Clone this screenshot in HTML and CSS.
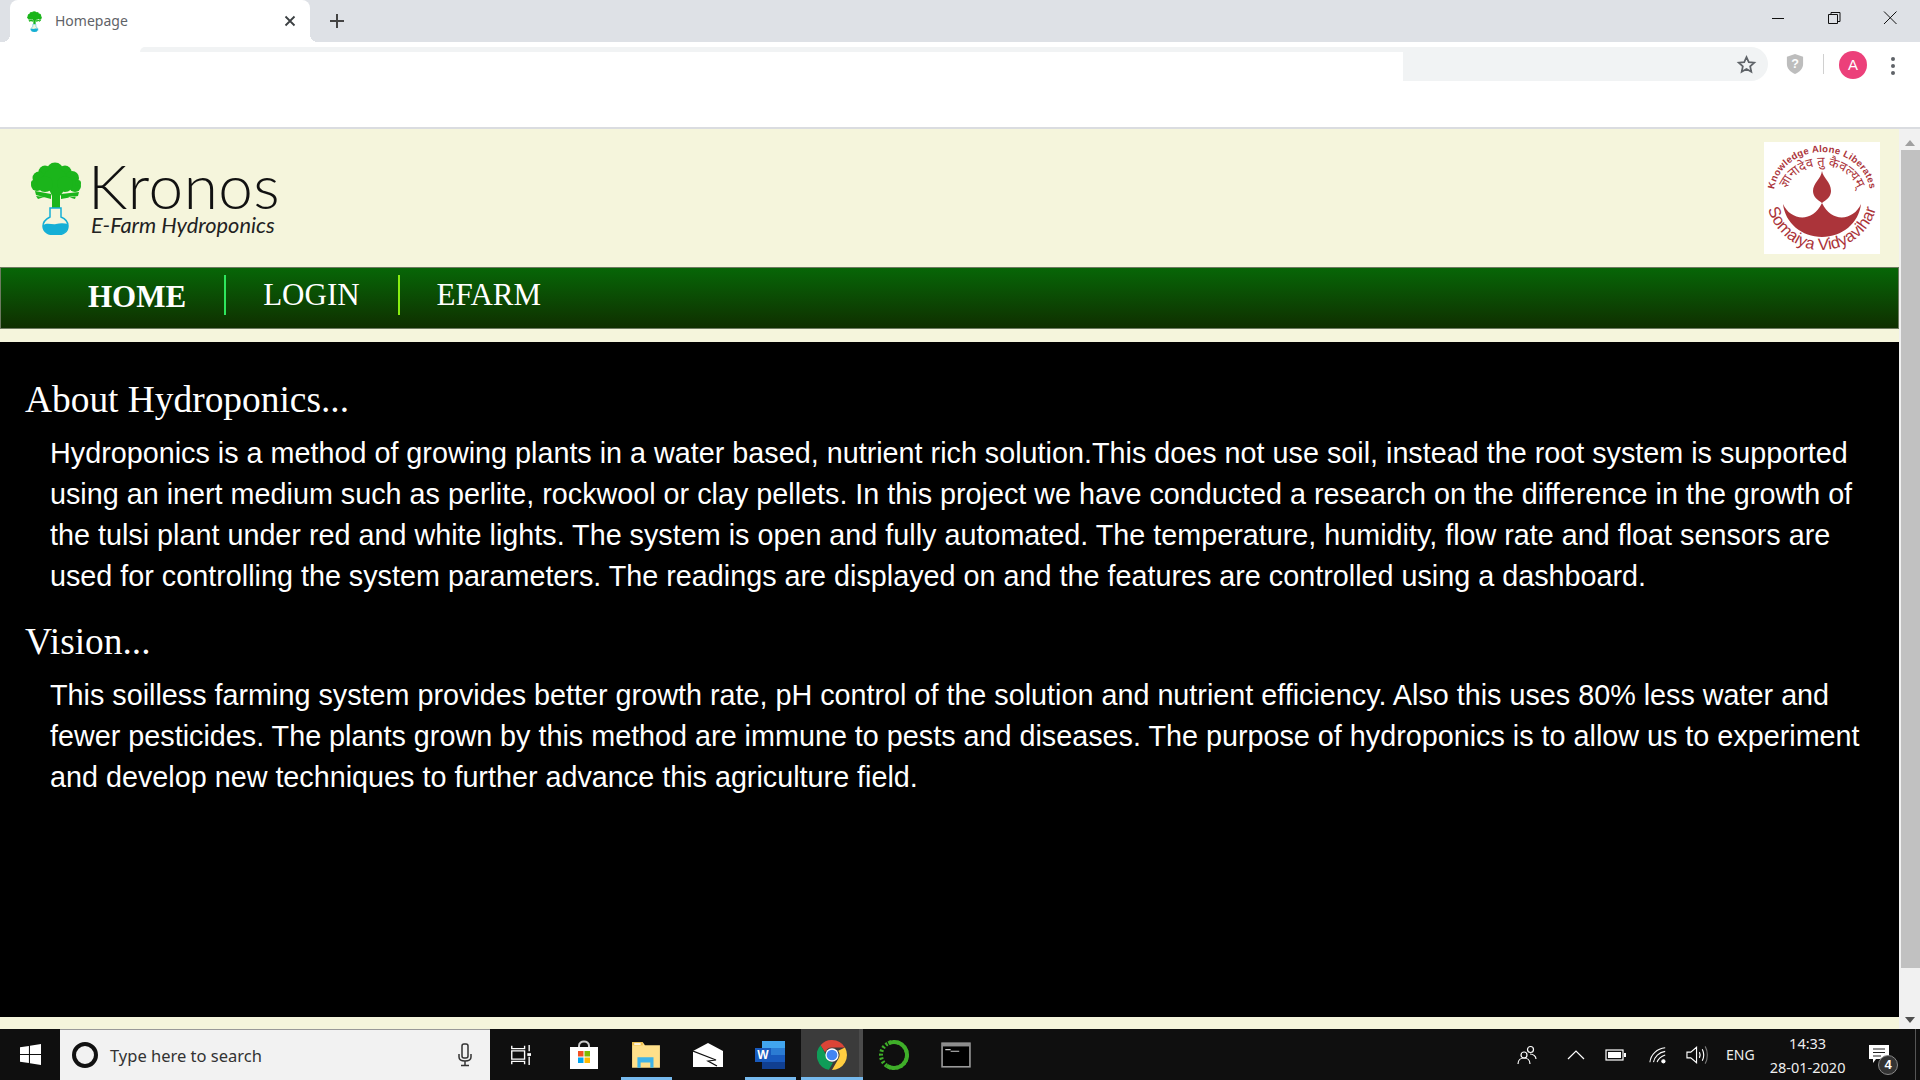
FILE: index.html
```html
<!DOCTYPE html>
<html lang="en">
<head>
  <meta charset="UTF-8" />
  <title>Homepage</title>
  <link rel="stylesheet" href="styles.css">
</head>
<body>
  <div class="tabstrip">
    <div class="tab">
      <svg class="favicon" viewBox="0 0 52 73"><use href="#kronos-mark"/></svg>
      <span class="tab-title">Homepage</span>
      <svg class="tab-close" viewBox="0 0 12 12"><path d="M1.5 1.5l9 9M10.5 1.5l-9 9"/></svg>
    </div>
    <svg class="new-tab" viewBox="0 0 16 16"><path d="M8 1v14M1 8h14"/></svg>
    <div class="win-controls">
      <svg viewBox="0 0 16 16"><path d="M2 8.500h12"/></svg>
      <svg viewBox="0 0 16 16"><path d="M2.500 4.500h9v9h-9zM5 4.500V2.500h9v9h-2.500"/></svg>
      <svg viewBox="0 0 16 16"><path d="M2 1.500l12.500 12.500M14.500 1.500L2 14"/></svg>
    </div>
  </div>

  <div class="toolbar">
    <div class="omnibox-strip"></div>
    <div class="omnibox">
      <svg class="star" viewBox="0 0 24 24"><path d="M12 3.500l2.600 5.800 6.300.7-4.700 4.200 1.300 6.200L12 17.200l-5.500 3.200 1.300-6.200L3.100 10l6.300-.7z"/></svg>
    </div>
    <svg class="shield" viewBox="0 0 20 24"><path d="M10 1l9 3v8c0 5-4 9-9 11-5-2-9-6-9-11V4z"/><text x="10" y="16.500" text-anchor="middle">?</text></svg>
    <span class="toolbar-sep"></span>
    <span class="avatar">A</span>
    <span class="kebab"><i></i><i></i><i></i></span>
  </div>

  <div class="viewport">
    <div class="page">
      <header class="site-header">
        <div class="brand">
          <svg class="brand-mark" viewBox="0 0 52 73"><use href="#kronos-mark"/></svg>
          <div class="brand-text">
            <div class="brand-name">Kronos</div>
            <div class="brand-sub">E-Farm Hydroponics</div>
          </div>
        </div>
        <svg class="college-logo" viewBox="0 0 116 112">
          <defs>
            <path id="arc-top" d="M10 52a48 42 0 0 1 96 0"/>
            <path id="arc-mid" d="M21 56a37 32 0 0 1 74 0"/>
            <path id="arc-low" d="M2 52a56 56 0 0 0 112 0"/>
          </defs>
          <text class="logo-top"><textPath href="#arc-top" startOffset="50%" text-anchor="middle">Knowledge Alone Liberates</textPath></text>
          <text class="logo-mid"><textPath href="#arc-mid" startOffset="50%" text-anchor="middle">ज्ञानादेव तु कैवल्यम्</textPath></text>
          <text class="logo-low"><textPath href="#arc-low" startOffset="50%" text-anchor="middle">Somaiya Vidyavihar</textPath></text>
          <path class="logo-flame" d="M58 29c1 7 9 11 9 20 0 6-5 9-9 12-4-3-9-6-9-12 0-8 8-12 9-20z"/>
          <path class="logo-flame" d="M19 62c7 16 29 20 39-1 10 21 32 17 39 1-2 19-19 33-39 33S21 81 19 62z"/>
        </svg>
      </header>

      <nav class="site-nav">
        <a class="nav-home">HOME</a>
        <a class="nav-green">LOGIN</a>
        <a class="nav-lime">EFARM</a>
      </nav>

      <main class="about">
        <h2>About Hydroponics...</h2>
        <p>Hydroponics is a method of growing plants in a water based, nutrient rich solution.This does not use soil, instead the root system is supported using an inert medium such as perlite, rockwool or clay pellets. In this project we have conducted a research on the difference in the growth of the tulsi plant under red and white lights. The system is open and fully automated. The temperature, humidity, flow rate and float sensors are used for controlling the system parameters. The readings are displayed on and the features are controlled using a dashboard.</p>
        <h2>Vision...</h2>
        <p>This soilless farming system provides better growth rate, pH control of the solution and nutrient efficiency. Also this uses 80% less water and fewer pesticides. The plants grown by this method are immune to pests and diseases. The purpose of hydroponics is to allow us to experiment and develop new techniques to further advance this agriculture field.</p>
      </main>
    </div>
    <div class="scrollbar">
      <span class="arrow-up"></span>
      <span class="thumb"></span>
      <span class="arrow-down"></span>
    </div>
  </div>

  <footer class="taskbar">
    <div class="start">
      <svg viewBox="0 0 20 20"><path d="M0 3l8.500-1.200v7.700H0zM9.500 1.600L20 0v9.500H9.500zM0 10.500h8.500v7.700L0 17zM9.500 10.500H20V20L9.500 18.400z"/></svg>
    </div>
    <div class="search">
      <span class="cortana"></span>
      <span class="search-text">Type here to search</span>
      <svg class="mic" viewBox="0 0 16 24"><rect x="5" y="1" width="6" height="14" rx="2"/><path d="M2 11v3c0 3 3 4 6 4s6-1 6-4v-3M8 18v4M4 22.500h8"/></svg>
    </div>
    <div class="task-slot slot-taskview">
      <svg class="taskview" viewBox="0 0 24 24"><path d="M3 2v3h14V2M3 7.500h14v9H3zM3 22v-3h14v3M22 1v7M22 14v9"/><rect x="20" y="10" width="4" height="3"/></svg>
    </div>
    <div class="task-slot">
      <svg class="icon-28" viewBox="0 0 28 30"><path class="bag-handle" d="M9 8V6c0-6 10-6 10 0v2"/><path d="M0 7h28v22H0z" fill="#fff"/><rect x="8" y="11" width="5.500" height="5.500" fill="#f25022"/><rect x="14.500" y="11" width="5.500" height="5.500" fill="#7fba00"/><rect x="8" y="17.500" width="5.500" height="5.500" fill="#00a4ef"/><rect x="14.500" y="17.500" width="5.500" height="5.500" fill="#ffb900"/></svg>
    </div>
    <div class="task-slot running">
      <svg class="icon-28" viewBox="0 0 28 26"><path d="M1 1h10l2 3h14v21H1z" fill="#ffe08a"/><path d="M1 1h10v3H1z" fill="#f0c14b"/><path d="M6 15h15v10h-3v-5H9v5H6z" fill="#3fb4e8"/><rect x="3" y="2" width="6" height="1.500" fill="#fff"/></svg>
    </div>
    <div class="task-slot">
      <svg class="icon-28" viewBox="0 0 30 24"><path d="M0 8L15 0l15 8v16H0z" fill="#fff"/><path class="mail-fold" d="M0 8l23 9-8 1 9 5"/></svg>
    </div>
    <div class="task-slot running">
      <svg class="icon-28" viewBox="0 0 30 28"><rect x="7" y="0" width="23" height="7" fill="#41a5ee"/><rect x="7" y="7" width="23" height="7" fill="#2b7cd3"/><rect x="7" y="14" width="23" height="7" fill="#185abd"/><rect x="7" y="21" width="23" height="7" fill="#103f91"/><rect x="0" y="7" width="16" height="14" fill="#185abd"/><text class="word-w" x="8" y="18" text-anchor="middle">W</text></svg>
    </div>
    <div class="task-slot active">
      <svg class="icon-28" viewBox="0 0 28 28">
        <path d="M14 0a14 14 0 0 1 12.100 7H14a7 7 0 0 0-6.500 4.400L3.300 4.800A14 14 0 0 1 14 0z" fill="#db4437"/>
        <path d="M3.300 4.800l5.900 10.400a5 7 0 0 0 5.800 5.800l-3.900 6.800A14 14 0 0 1 3.300 4.800z" fill="#0f9d58"/>
        <path d="M26.100 7a14 14 0 0 1-12.100 21l6-10.500A7 7 0 0 0 19.800 10z" fill="#ffcd40"/>
        <circle cx="14" cy="14" r="6.200" fill="#fff"/><circle cx="14" cy="14" r="5" fill="#4285f4"/>
      </svg>
    </div>
    <div class="task-slot">
      <svg class="icon-ring" viewBox="0 0 32 32"><circle class="ring-dots" cx="16" cy="16" r="13"/><circle class="ring-solid" cx="16" cy="16" r="13"/></svg>
    </div>
    <div class="task-slot">
      <svg class="icon-28" viewBox="0 0 28 24"><rect x="1" y="1" width="26" height="22" fill="#000" stroke="#9a9a9a" stroke-width="1.500"/><rect x="1" y="1" width="26" height="3" fill="#8c8c8c"/><path d="M4 7h5M9 8.500h8" stroke="#ccc" fill="none"/></svg>
    </div>

    <div class="tray">
      <svg class="tray-people" viewBox="0 0 20 20"><circle cx="7" cy="10" r="3"/><circle cx="13.500" cy="4.500" r="3"/><path d="M1 19c0-4 3-6 6-6s6 2 6 6M13 9c3 0 6 2 6 5"/></svg>
      <svg class="tray-chevron" viewBox="0 0 18 10"><path d="M1 9l8-8 8 8"/></svg>
      <svg class="tray-battery" viewBox="0 0 22 12"><rect x="1" y="1" width="17" height="10" class="batt-case"/><rect x="3" y="3" width="13" height="6" fill="#fff"/><rect x="19" y="4" width="2" height="4" fill="#fff"/></svg>
      <svg class="tray-wifi" viewBox="0 0 20 20"><path d="M1 18C2 9 9 3 18 2M5 18C6 12 11 7 18 6M9 18c1-3 3-6 9-8"/><circle cx="16" cy="17" r="1.800" class="dot"/></svg>
      <svg class="tray-volume" viewBox="0 0 24 20"><path d="M1 7h4l6-5v16l-6-5H1zM14 7c1 2 1 4 0 6M17 4c2 4 2 8 0 12"/><path d="M20 1c3 5 3 13 0 18" class="faint"/></svg>
      <span class="tray-lang">ENG</span>
      <div class="clock"><span>14:33</span><span>28-01-2020</span></div>
      <div class="notif">
        <svg viewBox="0 0 20 18"><path d="M0 0h20v14H7l-3 4v-4H0z" fill="#fff"/><path d="M4 4h12M4 7.500h12M4 11h8" stroke="#222" fill="none"/></svg>
        <span class="notif-badge">4</span>
      </div>
    </div>
  </footer>

  <svg class="sprites">
    <symbol id="kronos-mark" viewBox="0 0 52 73">
      <g fill="#1bb51b">
        <circle cx="25" cy="9" r="8.500"/><circle cx="15" cy="10" r="6.500"/><circle cx="35" cy="10" r="6.500"/>
        <circle cx="9" cy="16" r="6.500"/><circle cx="42" cy="16" r="7"/><circle cx="7" cy="23" r="6"/><circle cx="45" cy="24" r="6"/>
        <circle cx="25" cy="18" r="12"/><circle cx="15" cy="22" r="8"/><circle cx="35" cy="22" r="8"/>
        <circle cx="4" cy="21" r="3"/><circle cx="48" cy="21" r="3"/>
        <path d="M19 27h14v3l-3 4v12h-8V34z"/>
        <path d="M21 32L5 29l1 4 15 4zM31 32l18-2-1 4-17 3zM6 34l8 1-6 2zM46 34l-8 1 7 2z"/>
      </g>
      <path d="M20 46h11v9c5 2 7 6 7 9 0 6-5 9-12 9s-13-3-13-9c0-4 3-7 7-9z" fill="#f5f5dc" stroke="#14afd6" stroke-width="1.500"/>
      <path d="M13 63c5-3 9 0 13-1s8-1 12 0c1 7-5 11-12 11s-14-4-13-10z" fill="#14afd6"/>
    </symbol>
  </svg>
</body>
</html>
```
FILE: styles.css
```css
html, body {
  margin: 0;
  height: 100%;
  overflow: hidden;
}
body {
  font-family: "Liberation Sans", Arial, sans-serif;
  background-color: #f5f5dc;
  display: flex;
  flex-direction: column;
}
.sprites {
  display: none;
}

/* browser chrome */
.tabstrip {
  height: 42px;
  background-color: #dee1e6;
  display: flex;
  align-items: center;
}
.tab {
  width: 300px;
  height: 42px;
  margin-left: 10px;
  background: white;
  border-radius: 8px 8px 0 0;
  display: flex;
  align-items: center;
  box-sizing: border-box;
  padding: 0 14px 0 14px;
  position: relative;
}
.tab::before, .tab::after {
  content: "";
  position: absolute;
  bottom: 0;
  width: 8px;
  height: 8px;
}
.tab::before {
  left: -8px;
  background: radial-gradient(circle at 0 0, transparent 8px, white 8px);
}
.tab::after {
  right: -8px;
  background: radial-gradient(circle at 100% 0, transparent 8px, white 8px);
}
.favicon {
  width: 21px;
  height: 21px;
}
.tab-title {
  font-family: "Noto Sans", sans-serif;
  font-size: 14px;
  color: #5f6368;
  margin: -2px 0 0 10px;
  flex: 1;
}
.tab-close {
  width: 12px;
  height: 12px;
  fill: none;
  stroke: #3c4043;
  stroke-width: 1.800;
}
.new-tab {
  width: 16px;
  height: 16px;
  margin-left: 19px;
  fill: none;
  stroke: #444;
  stroke-width: 2;
}
.win-controls {
  margin-left: auto;
  display: flex;
  gap: 40px;
  padding: 0 22px 6px 0;
}
.win-controls svg {
  width: 16px;
  height: 16px;
  fill: none;
  stroke: #111;
  stroke-width: 1;
}
.toolbar {
  height: 80px;
  background: white;
  border-bottom: 2px solid #dadce0;
  position: relative;
  display: flex;
  align-items: flex-start;
  padding-top: 5px;
}
.omnibox-strip {
  position: absolute;
  left: 140px;
  top: 5px;
  width: 1290px;
  height: 5px;
  background: #f1f3f4;
  border-radius: 5px 0 0 0;
}
.omnibox {
  width: 365px;
  height: 34px;
  margin-left: 1403px;
  background: #f1f3f4;
  border-radius: 0 17px 17px 0;
  display: flex;
  align-items: center;
  justify-content: flex-end;
  padding-right: 11px;
  box-sizing: border-box;
}
.star {
  width: 21px;
  height: 21px;
  fill: none;
  stroke: #5f6368;
  stroke-width: 2;
}
.shield {
  width: 18px;
  height: 22px;
  margin: 6px 0 0 18px;
  fill: #bdbdbd;
}
.shield text {
  font-size: 14px;
  font-weight: bold;
  fill: white;
}
.toolbar-sep {
  width: 1px;
  height: 20px;
  background: #d0d0d0;
  margin: 7px 0 0 19px;
}
.avatar {
  width: 28px;
  height: 28px;
  border-radius: 50%;
  background: #ec407a;
  color: white;
  font-size: 15px;
  text-align: center;
  line-height: 28px;
  margin: 4px 0 0 15px;
}
.kebab {
  display: flex;
  flex-direction: column;
  gap: 3px;
  margin: 10px 0 0 24px;
}
.kebab i {
  width: 4px;
  height: 4px;
  border-radius: 50%;
  background: #5f6368;
}

/* page */
.viewport {
  height: 900px;
  display: flex;
}
.page {
  flex: 1;
  min-width: 0;
  display: flex;
  flex-direction: column;
}
.site-header {
  height: 138px;
  display: flex;
  justify-content: space-between;
  align-items: flex-start;
  padding: 13px 19px 0 30px;
  box-sizing: border-box;
}
.brand {
  display: flex;
  padding-top: 20px;
}
.brand-mark {
  width: 52px;
  height: 73px;
}
.brand-text {
  margin-left: 6px;
}
.brand-name {
  font-family: "Lato", sans-serif;
  font-weight: 300;
  font-size: 62px;
  line-height: 50px;
  letter-spacing: 0.5px;
  color: #111;
  margin-top: -2px;
  padding-bottom: 2px;
}
.brand-sub {
  font-family: "Lato", sans-serif;
  font-style: italic;
  font-size: 21.800px;
  line-height: 26px;
  color: #222;
  margin-left: 3px;
}
.college-logo {
  width: 116px;
  height: 112px;
  background: white;
}
.logo-top {
  font-size: 9.500px;
  font-weight: bold;
  letter-spacing: 0.3px;
  fill: #ab343a;
}
.logo-mid {
  font-family: "Noto Sans", "Noto Sans CJK SC", sans-serif;
  font-size: 13px;
  fill: #ab343a;
}
.logo-low {
  font-size: 16.500px;
  fill: #ab343a;
}
.logo-flame {
  fill: #ab343a;
}
.site-nav {
  height: 62px;
  box-sizing: border-box;
  border: 1px solid #6d7a60;
  background: linear-gradient(#076607, #0f2f00);
  display: flex;
  align-items: center;
  padding-left: 49px;
}
.site-nav a {
  font-family: "Liberation Serif", "Times New Roman", serif;
  font-size: 31px;
  color: white;
  padding: 0 38px 0 37px;
  line-height: 40px;
  margin-bottom: 6px;
  border-left: 2px solid transparent;
}
.site-nav .nav-home {
  font-weight: bold;
  margin-bottom: 2px;
  padding-left: 38px;
  border-left: 0;
}
.site-nav .nav-green {
  border-left-color: #2ee65c;
}
.site-nav .nav-lime {
  border-left-color: #88ee11;
}
.about {
  margin-top: 13px;
  height: 675px;
  background: black;
  color: white;
  padding: 33px 30px 0 25px;
  box-sizing: border-box;
}
.about h2 {
  font-family: "Liberation Serif", "Times New Roman", serif;
  font-weight: normal;
  font-size: 37.400px;
  line-height: 50px;
  margin: 0;
}
.about p {
  font-size: 28.760px;
  line-height: 41px;
  margin: 8px 0 20px 25px;
}
.scrollbar {
  width: 21px;
  flex: none;
  background: #f1f1f1;
  display: flex;
  flex-direction: column;
  align-items: center;
}
.arrow-up, .arrow-down {
  width: 0;
  height: 0;
  border-left: 5px solid transparent;
  border-right: 5px solid transparent;
}
.arrow-up {
  border-bottom: 6px solid #a0a0a0;
  margin-top: 11px;
}
.thumb {
  width: 19px;
  flex: 1;
  align-self: flex-end;
  background: #c1c1c1;
  margin: 4px 0 49px;
}
.arrow-down {
  border-top: 6px solid #505050;
  margin-bottom: 6px;
}

/* taskbar */
.taskbar {
  height: 51px;
  background: #0f0f0f;
  color: white;
  display: flex;
  align-items: stretch;
}
.start {
  width: 60px;
  display: flex;
  align-items: center;
  justify-content: center;
}
.start svg {
  width: 21px;
  height: 21px;
  fill: white;
}
.search {
  width: 430px;
  background: #f2f2f2;
  border-top: 1px solid #999;
  box-sizing: border-box;
  display: flex;
  align-items: center;
  padding: 0 17px 0 12px;
  margin-right: 1px;
}
.cortana {
  width: 18px;
  height: 18px;
  border: 4px solid #111;
  border-radius: 50%;
}
.search-text {
  font-family: "Noto Sans", sans-serif;
  font-size: 16.500px;
  color: #333;
  margin-left: 12px;
  flex: 1;
}
.mic {
  width: 16px;
  height: 24px;
  fill: none;
  stroke: #333;
  stroke-width: 1.500;
}
.task-slot {
  width: 62px;
  display: flex;
  align-items: center;
  justify-content: center;
  position: relative;
}
.slot-taskview {
  padding-right: 5px;
  box-sizing: border-box;
}
.task-slot.running::after,
.task-slot.active::after {
  content: "";
  position: absolute;
  left: 6px;
  right: 5px;
  bottom: 0;
  height: 3px;
  background: #76b9ed;
}
.task-slot.active {
  background: #3b3b3b;
  box-shadow: inset -4px 0 #4b4b4b;
}
.task-slot.active::after {
  left: 0;
  right: 0;
}
.taskview {
  width: 22px;
  height: 22px;
  fill: none;
  stroke: white;
  stroke-width: 1.500;
}
.taskview rect {
  fill: white;
  stroke: none;
}
.icon-28 {
  width: 30px;
  height: 30px;
}
.icon-ring {
  width: 32px;
  height: 32px;
}
.bag-handle {
  fill: none;
  stroke: #ccc;
  stroke-width: 2;
}
.mail-fold {
  fill: none;
  stroke: #0f0f0f;
  stroke-width: 1.200;
}
.word-w {
  font-size: 12px;
  font-weight: bold;
  fill: white;
}
.ring-solid {
  fill: none;
  stroke: #3fae29;
  stroke-width: 4;
  stroke-dasharray: 55 27;
  stroke-dashoffset: 27;
}
.ring-dots {
  fill: none;
  stroke: #3fae29;
  stroke-width: 4;
  stroke-dasharray: 2 2;
}
.tray {
  margin-left: auto;
  display: flex;
  align-items: center;
  width: 412px;
  position: relative;
}
.tray::after {
  content: "";
  position: absolute;
  left: 407px;
  top: 0;
  bottom: 0;
  width: 1px;
  background: #555;
}
.tray svg {
  fill: none;
  stroke: white;
  stroke-width: 1.200;
  flex: none;
}
.tray-people {
  width: 20px;
  height: 20px;
  margin-left: 9px;
}
.tray-chevron {
  width: 18px;
  height: 10px;
  margin-left: 30px;
}
.tray-battery {
  width: 22px;
  height: 12px;
  margin-left: 20px;
}
.tray svg rect:not(.batt-case) {
  stroke: none;
}
.tray-wifi {
  width: 18px;
  height: 18px;
  margin-left: 22px;
}
.tray-wifi .dot {
  fill: white;
}
.tray-volume {
  width: 23px;
  height: 20px;
  margin-left: 19px;
}
.tray-volume .faint {
  stroke: #777;
}
.tray-lang {
  font-family: "Noto Sans", sans-serif;
  font-size: 14px;
  margin-left: 17px;
  color: #eee;
}
.clock {
  font-family: "Noto Sans", sans-serif;
  font-size: 14.500px;
  line-height: 24px;
  color: #eee;
  display: flex;
  flex-direction: column;
  align-items: center;
  margin-left: 14px;
  width: 78px;
}
.notif {
  position: absolute;
  left: 361px;
  top: 16px;
}
.notif svg {
  width: 20px;
  height: 18px;
  stroke: none;
  display: block;
}
.notif-badge {
  position: absolute;
  left: 9px;
  top: 10px;
  width: 20px;
  height: 20px;
  box-sizing: border-box;
  border: 1px solid #888;
  border-radius: 50%;
  background: #333;
  font-size: 13px;
  font-weight: bold;
  line-height: 18px;
  text-align: center;
}
```
